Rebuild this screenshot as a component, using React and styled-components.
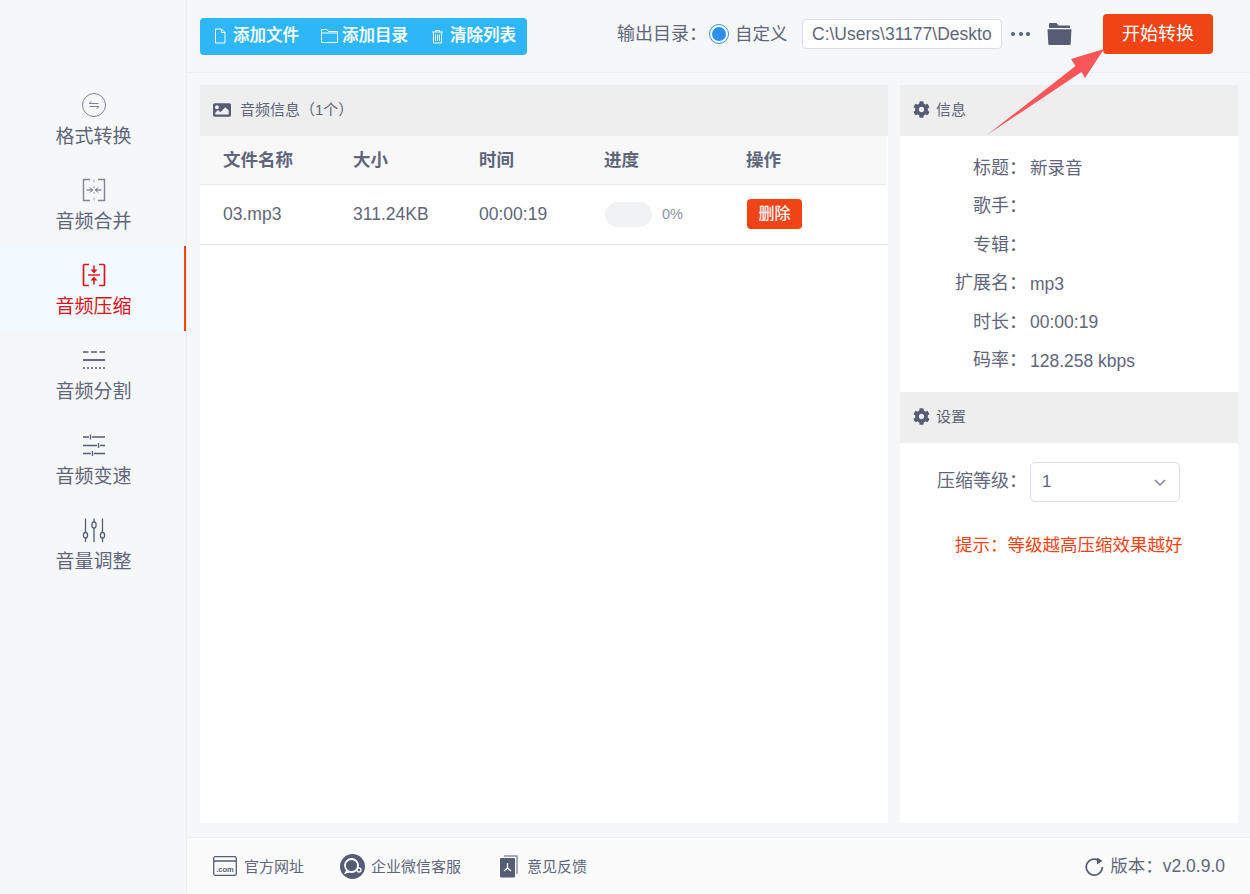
import React from "react";
import styled, { createGlobalStyle } from "styled-components";
import { FaCog, FaImage } from "react-icons/fa";

const INK = "#5f667b";
const ICON = "#555c74";
const ORANGE = "#f04416";
const FONT = `"Liberation Sans", "Noto Sans CJK SC", sans-serif`;
const COLON = "\uFF1A";
const LP = "\uFF08";
const RP = "\uFF09";

const Global = createGlobalStyle`
  html, body { margin: 0; padding: 0; background: #f6f7f9; }
  body { font-family: ${FONT}; line-height: 1.4; color: ${INK}; overflow: hidden; }
  * { box-sizing: border-box; }
`;

const Page = styled.div`
  position: relative;
  display: flex;
  width: 1250px;
  height: 894px;
  overflow: hidden;
  background: #f6f7f9;
`;
const Sidebar = styled.nav`
  width: 187px;
  flex: none;
  padding-top: 76px;
  border-right: 1px solid #eceef1;
`;
const NavItem = styled.div`
  height: 85px;
  display: flex;
  flex-direction: column;
  align-items: center;
  padding: 16px 0 0 3px;
  gap: 5px;
  font-size: 19px;
  line-height: 28px;
  color: ${(p) => (p.$active ? "#d8141c" : INK)};
  background: ${(p) => (p.$active ? "#f2faff" : "transparent")};
  border-right: 2px solid ${(p) => (p.$active ? ORANGE : "transparent")};
  svg { display: block; }
`;
const Main = styled.div`
  flex: 1;
  min-width: 0;
  display: flex;
  flex-direction: column;
`;
const TopBar = styled.header`
  height: 73px;
  flex: none;
  display: flex;
  align-items: center;
  justify-content: space-between;
  padding: 0 37px 0 13px;
  border-bottom: 1px solid #eceef1;
`;
const ToolGroup = styled.div`
  width: 327px;
  height: 37px;
  display: flex;
  align-items: center;
  padding-left: 14px;
  background: #2fb6f6;
  border-radius: 4px;
  color: #fff;
`;
const Tool = styled.button`
  display: flex;
  align-items: center;
  gap: ${(p) => p.$gap}px;
  width: ${(p) => p.$w}px;
  flex: none;
  padding: 0;
  border: 0;
  background: none;
  color: inherit;
  font: 500 16.5px/1.4 ${FONT};
  -webkit-text-stroke: 0.2px #fff;
`;
const OutputRow = styled.div`
  display: flex;
  align-items: center;
  margin-bottom: 4px;
`;
const OutLabel = styled.span`
  font-size: 18px;
  line-height: 26px;
  width: 92px;
  white-space: nowrap;
  margin-bottom: 1px;
`;
const RadioDot = styled.span`
  width: 20px;
  height: 20px;
  flex: none;
  border-radius: 50%;
  border: 1.5px solid #2e8ff0;
  display: flex;
  align-items: center;
  justify-content: center;
  background: #fff;
  &::after {
    content: "";
    width: 14px;
    height: 14px;
    border-radius: 50%;
    background: #2e8ff0;
  }
`;
const RadioText = styled.span`
  font-size: 17.5px;
  margin-left: 6px;
  width: 67px;
`;
const PathBox = styled.div`
  width: 200px;
  height: 30px;
  padding: 0 9px;
  border: 1px solid #dcdfe6;
  border-radius: 4px;
  background: #fff;
  font-size: 17.5px;
  line-height: 28px;
  white-space: nowrap;
`;
const Dots = styled.span`
  display: flex;
  gap: 3.5px;
  margin: 0 17px 0 9px;
  i { width: 4px; height: 4px; border-radius: 50%; background: ${ICON}; }
`;
const StartButton = styled.button`
  width: 110px;
  height: 40px;
  margin-left: 31px;
  padding: 1px 0 0;
  border: 0;
  border-radius: 4px;
  background: ${ORANGE};
  color: #fff;
  font: 18px/1.4 ${FONT};
`;
const Content = styled.main`
  flex: 1;
  min-height: 0;
  display: flex;
  gap: 12px;
  padding: 12px 12px 14px 13px;
`;
const Panel = styled.section`
  width: ${(p) => p.$w}px;
  flex: none;
  background: #fff;
  display: flex;
  flex-direction: column;
`;
const PanelHead = styled.div`
  height: 51px;
  flex: none;
  display: flex;
  align-items: center;
  gap: ${(p) => p.$gap || 6}px;
  padding: 0 0 2px 13px;
  background: #eeeeee;
  font-size: 15px;
`;
const TableHead = styled.div`
  display: grid;
  grid-template-columns: 130px 126px 125px 142px 1fr;
  align-items: center;
  height: 49px;
  padding-left: 23px;
  margin-right: 2px;
  background: #f8f8f9;
  border-bottom: 1px solid #e8e9ec;
  font-size: 17.5px;
  font-weight: 700;
`;
const TableRow = styled.div`
  display: grid;
  grid-template-columns: 130px 126px 125px 142px 1fr;
  align-items: center;
  height: 60px;
  padding-left: 23px;
  border-bottom: 1px solid #e2e3e6;
  font-size: 17.5px;
`;
const Progress = styled.div`
  display: flex;
  align-items: center;
  gap: 10px;
  padding-left: 1px;
  font-size: 14.5px;
  color: #8d92a2;
`;
const Track = styled.span`
  width: 47px;
  height: 25px;
  border-radius: 13px;
  background: #f1f2f3;
`;
const DeleteButton = styled.button`
  display: block;
  width: 55px;
  height: 30px;
  margin: 0 0 1px 1px;
  padding: 0;
  border: 0;
  border-radius: 4px;
  background: ${ORANGE};
  color: #fff;
  font: 16px/1.4 ${FONT};
  -webkit-text-stroke: 0.2px #fff;
`;
const InfoList = styled.dl`
  margin: 0;
  padding: 13px 0 12px;
`;
const InfoRow = styled.div`
  display: flex;
  align-items: center;
  height: 38.5px;
  font-size: 17.5px;
`;
const Label = styled.dt`
  width: 127px;
  flex: none;
  text-align: right;
  margin-right: 3px;
  font-size: 18px;
`;
const Value = styled.dd`
  margin: 0;
`;
const SettingRow = styled.div`
  display: flex;
  align-items: center;
  margin-top: 19px;
  font-size: 17.5px;
`;
const SelectBox = styled.div`
  width: 150px;
  height: 40px;
  display: flex;
  align-items: center;
  justify-content: space-between;
  padding: 0 12px 0 11px;
  border: 1px solid #dcdfe6;
  border-radius: 5px;
  font-size: 17px;
`;
const Hint = styled.p`
  margin: 30px 0 0 55px;
  font-size: 17.5px;
  line-height: 26px;
  color: ${ORANGE};
  white-space: nowrap;
`;
const Footer = styled.footer`
  height: 57px;
  flex: none;
  display: flex;
  align-items: center;
  padding: 0 25px 0 26px;
  background: #fbfbfc;
  border-top: 1px solid #eceef1;
  font-size: 15px;
`;
const FootLink = styled.span`
  display: flex;
  align-items: center;
  gap: ${(p) => p.$gap}px;
  margin-right: ${(p) => p.$mr}px;
`;
const Version = styled.span`
  margin-left: auto;
  display: flex;
  align-items: center;
  gap: 6px;
  font-size: 17.5px;
`;
const ArrowLayer = styled.svg`
  position: absolute;
  left: 0;
  top: 0;
  pointer-events: none;
`;

const Sv = ({ w = 24, h = 24, children, ...rest }) => (
  <svg width={w} height={h} viewBox={`0 0 ${w} ${h}`} fill="none" stroke={ICON} strokeWidth="1" {...rest}>
    {children}
  </svg>
);

const navItems = [
  {
    label: "格式转换",
    icon: (
      <Sv w={26} h={26}>
        <circle cx="13" cy="13" r="11.5" stroke="#7f8597" />
        <path d="M8 11.5h9.5M8 11.5l2.5-2.2M18 14.5H8.500M18 14.5l-2.5 2.2" stroke="#7f8597" />
      </Sv>
    ),
  },
  {
    label: "音频合并",
    icon: (
      <Sv w={26} h={26}>
        <path d="M9 2.500H2.500v21H9M17 2.500h6.500v21H17" stroke="#7f8597" strokeWidth="1.400" />
        <path d="M13 2.500v3M13 9v2M13 15v2M13 20.500v3" stroke="#9aa0af" />
        <path d="M5.500 13h6M9 10.500l2.500 2.500L9 15.500M20.500 13h-6M17 10.500L14.500 13l2.500 2.500" stroke={ICON} />
      </Sv>
    ),
  },
  {
    label: "音频压缩",
    active: true,
    icon: (
      <Sv w={26} h={26} stroke="#d8141c">
        <path d="M8 2.500H3.500a1 1 0 0 0-1 1v19a1 1 0 0 0 1 1H8M18 2.500h4.500a1 1 0 0 1 1 1v19a1 1 0 0 1-1 1H18" strokeWidth="1.700" />
        <path d="M7 13h12" strokeWidth="1.400" />
        <path d="M13 3.500v6M13 22.500v-6" strokeWidth="1.500" />
        <path d="M9.500 7.500h7L13 11.500zM9.500 18.500h7L13 14.500z" fill="#d8141c" stroke="none" />
      </Sv>
    ),
  },
  {
    label: "音频分割",
    icon: (
      <Sv w={26} h={26}>
        <path d="M2 5h5.500M10 5h6M18.500 5H24" strokeWidth="1.600" />
        <path d="M2 13h22" strokeWidth="1.800" />
        <path d="M2 21h22" strokeWidth="1.600" strokeDasharray="2 2" />
      </Sv>
    ),
  },
  {
    label: "音频变速",
    icon: (
      <Sv w={26} h={26}>
        <path d="M2 5h6M11 5h13M2 13.500h14M19 13.500h5M2 21.500h8M13 21.500h11" strokeWidth="1.500" />
        <path d="M9.500 2.500v5M17.500 11v5M11.500 19v5" strokeWidth="1.300" />
      </Sv>
    ),
  },
  {
    label: "音量调整",
    icon: (
      <Sv w={26} h={26}>
        <path d="M4.500 1.500v14M4.500 21v4M13 1.500v3.500M13 11v14M21.500 1.500v14M21.500 21v4" strokeWidth="1.300" />
        <rect x="2.500" y="15.500" width="4" height="5.500" rx="2" strokeWidth="1.300" />
        <rect x="11" y="5" width="4" height="6" rx="2" strokeWidth="1.300" />
        <rect x="19.500" y="15.500" width="4" height="5.500" rx="2" strokeWidth="1.300" />
      </Sv>
    ),
  },
];

const infoRows = [
  ["标题" + COLON, "新录音"],
  ["歌手" + COLON, ""],
  ["专辑" + COLON, ""],
  ["扩展名" + COLON, "mp3"],
  ["时长" + COLON, "00:00:19"],
  ["码率" + COLON, "128.258 kbps"],
];

export default function App() {
  return (
    <Page>
      <Global />
      <Sidebar>
        {navItems.map((n) => (
          <NavItem key={n.label} $active={n.active}>
            {n.icon}
            <span>{n.label}</span>
          </NavItem>
        ))}
      </Sidebar>
      <Main>
        <TopBar>
          <ToolGroup>
            <Tool $w={107} $gap={7}>
              <Sv w={12} h={16} stroke="#fff">
                <path d="M1.500 1h6l3.500 3.500V15h-9.500zM7.500 1v3.500H11" />
              </Sv>
              添加文件
            </Tool>
            <Tool $w={110} $gap={4}>
              <Sv w={17} h={14} stroke="#fff">
                <path d="M.5 13.500V.5h5.500l1.500 2h9v11zM.5 4h16" />
              </Sv>
              添加目录
            </Tool>
            <Tool $w={90} $gap={6}>
              <Sv w={13} h={15} stroke="#fff">
                <path d="M1 3h11M4.500 3V1.500h4V3M2.500 3.500v10.500h8V3.500" />
                <path d="M4.500 5.500v6.500M6.500 5.500v6.500M8.500 5.500v6.500" />
              </Sv>
              清除列表
            </Tool>
          </ToolGroup>
          <OutputRow>
            <OutLabel>{"输出目录" + COLON}</OutLabel>
            <RadioDot />
            <RadioText>自定义</RadioText>
            <PathBox>{"C:\\Users\\31177\\Deskto"}</PathBox>
            <Dots>
              <i />
              <i />
              <i />
            </Dots>
            <Sv w={25} h={22} stroke="none">
              <path d="M3 0h6.500l2 2.500H22a1 1 0 0 1 1 1V5H2V1a1 1 0 0 1 1-1z" fill={ICON} />
              <path d="M.5 6.200h24l-.8 14.500a1.300 1.300 0 0 1-1.300 1.300H2.600a1.300 1.300 0 0 1-1.300-1.300z" fill={ICON} />
            </Sv>
            <StartButton>开始转换</StartButton>
          </OutputRow>
        </TopBar>
        <Content>
          <Panel $w={688}>
            <PanelHead $gap={9}>
              <FaImage size={18} color={ICON} />
              {"音频信息" + LP + "1个" + RP}
            </PanelHead>
            <TableHead>
              <span>文件名称</span>
              <span>大小</span>
              <span>时间</span>
              <span>进度</span>
              <span>操作</span>
            </TableHead>
            <TableRow>
              <span>03.mp3</span>
              <span>311.24KB</span>
              <span>00:00:19</span>
              <Progress>
                <Track />
                0%
              </Progress>
              <span>
                <DeleteButton>删除</DeleteButton>
              </span>
            </TableRow>
          </Panel>
          <Panel $w={338}>
            <PanelHead>
              <FaCog size={17} color={ICON} />
              信息
            </PanelHead>
            <InfoList>
              {infoRows.map(([k, v]) => (
                <InfoRow key={k}>
                  <Label>{k}</Label>
                  <Value>{v}</Value>
                </InfoRow>
              ))}
            </InfoList>
            <PanelHead>
              <FaCog size={17} color={ICON} />
              设置
            </PanelHead>
            <SettingRow>
              <Label>{"压缩等级" + COLON}</Label>
              <SelectBox>
                1
                <Sv w={14} h={14} stroke="#7f8597" strokeWidth="1.500">
                  <path d="M2 5l5 5 5-5" />
                </Sv>
              </SelectBox>
            </SettingRow>
            <Hint>{"提示" + COLON + "等级越高压缩效果越好"}</Hint>
          </Panel>
        </Content>
        <Footer>
          <FootLink $gap={7} $mr={36}>
            <Sv w={24} h={20}>
              <rect x=".7" y=".7" width="22.600" height="18.600" rx="1.500" strokeWidth="1.300" />
              <path d="M1 5h22" strokeWidth="1.500" />
              <text x="12" y="15.500" fontSize="7.500" fill={ICON} stroke="none" textAnchor="middle" fontWeight="700">.com</text>
            </Sv>
            官方网址
          </FootLink>
          <FootLink $gap={6} $mr={38}>
            <Sv w={25} h={25}>
              <circle cx="12.500" cy="12.500" r="12.500" fill={ICON} stroke="none" />
              <circle cx="11.500" cy="11.500" r="6.500" stroke="#fff" strokeWidth="1.800" />
              <path d="M7 16l-1.500 3 4-1.500" stroke="#fff" strokeWidth="1.500" />
              <circle cx="19" cy="16" r="2" stroke="#fff" strokeWidth="1.300" />
            </Sv>
            企业微信客服
          </FootLink>
          <FootLink $gap={9} $mr={0}>
            <Sv w={19} h={23}>
              <path d="M5 1h13v18" stroke="#8a90a2" strokeWidth="1.500" />
              <rect x="1" y="3" width="15" height="19.500" rx="1" fill={ICON} stroke="none" />
              <path d="M8.500 8v5M8.500 13l-3.500 3M8.500 13l3.500 3" stroke="#fff" strokeWidth="1.300" />
            </Sv>
            意见反馈
          </FootLink>
          <Version>
            <Sv w={20} h={20} strokeWidth="1.700">
              <path d="M15.500 5a8 8 0 1 0 2.800 6" />
              <path d="M13 1.500l5.500 3.500-5.500 3.500z" fill={ICON} stroke="none" />
            </Sv>
            <span>{"版本" + COLON + "v2.0.9.0"}</span>
          </Version>
        </Footer>
      </Main>
      <ArrowLayer width="1250" height="894" viewBox="0 0 1250 894">
        <path d="M987 135L1075.500 66L1071 59L1104 49L1085 78L1081.500 72Z" fill="#f9565a" />
      </ArrowLayer>
    </Page>
  );
}
